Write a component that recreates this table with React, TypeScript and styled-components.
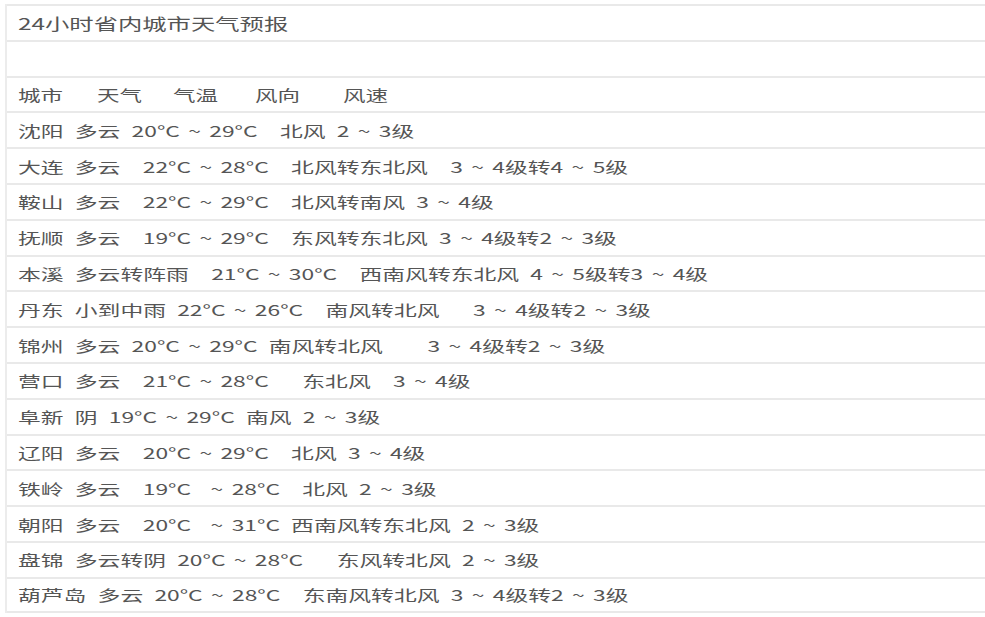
import React from "react";
import styled, { createGlobalStyle } from "styled-components";

const GlobalStyle = createGlobalStyle`
  html, body {
    margin: 0;
    padding: 0;
    background: #ffffff;
  }
  body {
    font-family: "Noto Sans CJK SC", "Noto Sans", sans-serif;
  }
`;

const rows: string[] = [
  "沈阳 多云 20°C ~ 29°C  北风 2 ~ 3级",
  "大连 多云  22°C ~ 28°C  北风转东北风  3 ~ 4级转4 ~ 5级",
  "鞍山 多云  22°C ~ 29°C  北风转南风 3 ~ 4级",
  "抚顺 多云  19°C ~ 29°C  东风转东北风 3 ~ 4级转2 ~ 3级",
  "本溪 多云转阵雨  21°C ~ 30°C  西南风转东北风 4 ~ 5级转3 ~ 4级",
  "丹东 小到中雨 22°C ~ 26°C  南风转北风   3 ~ 4级转2 ~ 3级",
  "锦州 多云 20°C ~ 29°C 南风转北风    3 ~ 4级转2 ~ 3级",
  "营口 多云  21°C ~ 28°C   东北风  3 ~ 4级",
  "阜新 阴 19°C ~ 29°C 南风 2 ~ 3级",
  "辽阳 多云  20°C ~ 29°C  北风 3 ~ 4级",
  "铁岭 多云  19°C  ~ 28°C  北风 2 ~ 3级",
  "朝阳 多云  20°C  ~ 31°C 西南风转东北风 2 ~ 3级",
  "盘锦 多云转阴 20°C ~ 28°C   东风转北风 2 ~ 3级",
  "葫芦岛 多云 20°C ~ 28°C  东南风转北风 3 ~ 4级转2 ~ 3级",
];

const headers: { label: string; gap: number }[] = [
  { label: "城市", gap: 0 },
  { label: "天气", gap: 34 },
  { label: "气温", gap: 31 },
  { label: "风向", gap: 37 },
  { label: "风速", gap: 43 },
];

// split a line on " ~ " so the tilde gets its own spacing
const renderLine = (line: string) => {
  const parts = line.split(" ~ ");
  return parts.map((p, i) => (
    <React.Fragment key={i}>
      {p}
      {i < parts.length - 1 && <Tilde>~</Tilde>}
    </React.Fragment>
  ));
};

export default function App() {
  return (
    <>
      <GlobalStyle />
      <Page>
        <Table>
          <Row>
            <Text size={16}>24小时省内城市天气预报</Text>
          </Row>
          <Row />
          <Row>
            <HeaderLine>
              {headers.map((h) => (
                <HeaderCell key={h.label} gap={h.gap}>
                  {h.label}
                </HeaderCell>
              ))}
            </HeaderLine>
          </Row>
          {rows.map((r, i) => (
            <Row key={i} last={i === rows.length - 1}>
              <Text size={15}>{renderLine(r)}</Text>
            </Row>
          ))}
        </Table>
      </Page>
    </>
  );
}

const Page = styled.div`
  width: 985px;
  height: 617px;
  overflow: hidden;
  padding: 4px 0 0 5px;
  box-sizing: border-box;
`;

const Table = styled.div`
  display: flex;
  flex-direction: column;
  border-left: 2px solid #ececec;
  width: 990px;
`;

const Row = styled.div<{ last?: boolean }>`
  box-sizing: border-box;
  height: 35.8px;
  display: flex;
  align-items: center;
  border-top: 2px solid #e9e9e9;
  border-bottom: ${({ last }) => (last ? "2px solid #e9e9e9" : "none")};
  padding-left: 11px;
`;

const Text = styled.span<{ size: number }>`
  display: inline-block;
  font-size: ${({ size }) => size}px;
  line-height: 1;
  color: #555555;
  white-space: pre;
  word-spacing: 4px;
  transform: scaleX(1.52);
  transform-origin: left center;
`;

const Tilde = styled.span`
  display: inline-block;
  margin: 0 5.5px;
`;

const HeaderLine = styled.div`
  display: flex;
  align-items: center;
`;

const HeaderCell = styled.span<{ gap: number }>`
  display: inline-block;
  font-size: 15px;
  line-height: 1;
  color: #555555;
  width: 45px;
  white-space: nowrap;
  margin-left: ${({ gap }) => gap}px;
  transform: scaleX(1.5);
  transform-origin: left center;
`;
